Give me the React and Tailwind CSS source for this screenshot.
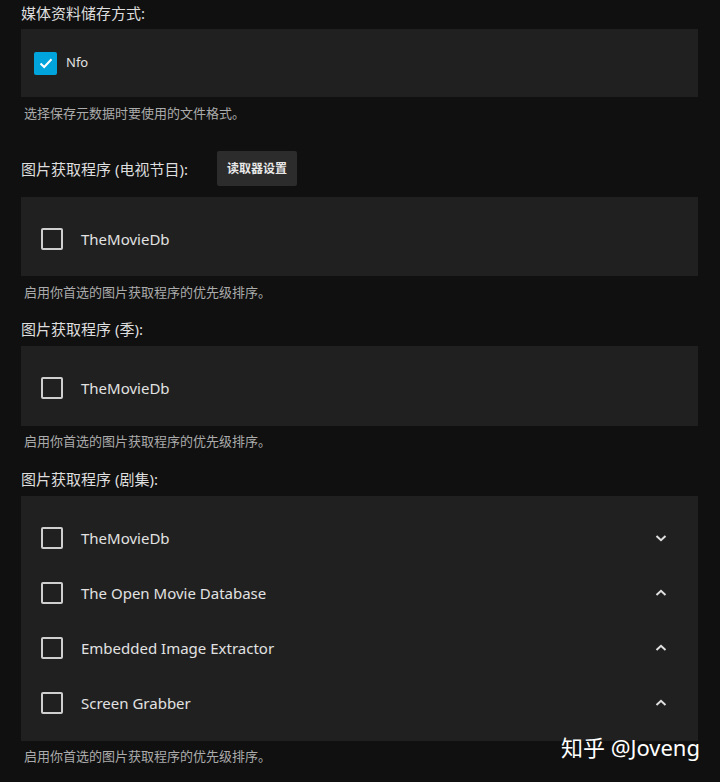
import React from 'react';

const font = { fontFamily: '"Noto Sans", "Noto Sans CJK SC", sans-serif' };

const Chevron = ({ up }) => (
    <svg width="14" height="10" viewBox="0 0 14 10" className="text-[#e0e0e0]">
        {up ? (
            <path d="M2.5 7 L7 2.8 L11.5 7" fill="none" stroke="currentColor" strokeWidth="2" />
        ) : (
            <path d="M2.5 3 L7 7.2 L11.5 3" fill="none" stroke="currentColor" strokeWidth="2" />
        )}
    </svg>
);

const Box = () => (
    <div className="w-[22px] h-[22px] border-2 border-[#cfcfcf] rounded-[2px] shrink-0"></div>
);

const Row = ({ label, chevron }) => (
    <div className="flex items-center h-[55px] pl-5 pr-[30px]">
        <Box />
        <span className="ml-[18px] text-[15px] text-[#e2e2e2] flex-1 mt-[2px]">{label}</span>
        {chevron && <Chevron up={chevron === 'up'} />}
    </div>
);

const Heading = ({ children }) => (
    <p className="text-[15px] leading-[20px] text-[#dedede]">{children}</p>
);

const Help = ({ children }) => (
    <p className="text-[13px] leading-[18px] text-[#ababab] pl-[3px]">{children}</p>
);

const App = () => {
    return (
        <div className="relative w-[720px] h-[782px] bg-[#101010] overflow-hidden pl-[21px] pr-[22px] pt-[3px]" style={font}>
            <Heading>媒体资料储存方式:</Heading>
            <div className="mt-[6px] h-[68px] bg-[#202020] flex items-center pl-[13px]">
                <div className="w-[23px] h-[23px] rounded-[2px] bg-[#00a4dc] flex items-center justify-center">
                    <svg width="16" height="16" viewBox="0 0 16 16">
                        <path d="M2.5 8.5 L6.2 12 L13.5 4.2" fill="none" stroke="white" strokeWidth="2" />
                    </svg>
                </div>
                <span className="ml-[9px] text-[13px] text-[#e2e2e2]">Nfo</span>
            </div>
            <div className="mt-[7px]">
                <Help>选择保存元数据时要使用的文件格式。</Help>
            </div>

            <div className="mt-[29px] flex items-center h-[35px]">
                <Heading>图片获取程序 (电视节目):</Heading>
                <button className="ml-[29px] h-[35px] w-[80px] rounded-[2px] bg-[#2c2c2c] text-[12px] font-bold text-[#e8e8e8]">读取器设置</button>
            </div>
            <div className="mt-[11px] h-[79px] bg-[#202020] pt-[14px]">
                <Row label="TheMovieDb" />
            </div>
            <div className="mt-[7px]">
                <Help>启用你首选的图片获取程序的优先级排序。</Help>
            </div>

            <div className="mt-[18px]">
                <Heading>图片获取程序 (季):</Heading>
            </div>
            <div className="mt-[7px] h-[80px] bg-[#202020] pt-[14px]">
                <Row label="TheMovieDb" />
            </div>
            <div className="mt-[6px]">
                <Help>启用你首选的图片获取程序的优先级排序。</Help>
            </div>

            <div className="mt-[19px]">
                <Heading>图片获取程序 (剧集):</Heading>
            </div>
            <div className="mt-[7px] bg-[#202020] pt-[14px] pb-[11px]">
                <Row label="TheMovieDb" chevron="down" />
                <Row label="The Open Movie Database" chevron="up" />
                <Row label="Embedded Image Extractor" chevron="up" />
                <Row label="Screen Grabber" chevron="up" />
            </div>
            <div className="mt-[6px]">
                <Help>启用你首选的图片获取程序的优先级排序。</Help>
            </div>

            <div className="absolute right-[20px] top-[732px] text-[22px] leading-[30px] text-white">知乎 @Joveng</div>
        </div>
    );
};

export default App;
